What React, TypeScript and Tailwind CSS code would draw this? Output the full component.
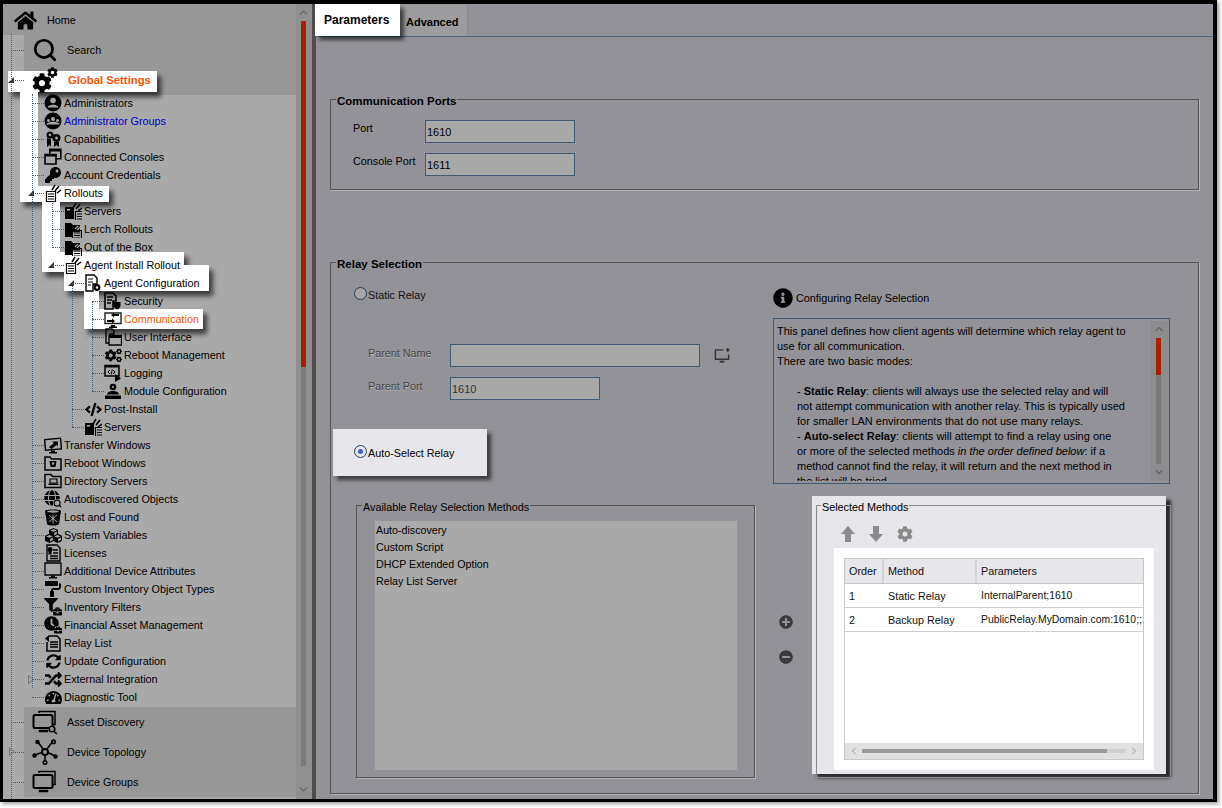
import type { ReactNode } from 'react'
import { Search, ChevronUp, ChevronDown, ChevronLeft, ChevronRight } from 'lucide-react'
import {
  FaHome, FaCog, FaKey, FaCogs, FaCode, FaGlobe, FaCubes, FaPaintRoller, FaFilter, FaBriefcase,
  FaClock, FaSyncAlt, FaRandom, FaTachometerAlt,
  FaInfoCircle, FaPlusCircle, FaMinusCircle,
} from 'react-icons/fa'

// base box for the small tree glyphs
function G({ children }: { children: ReactNode }) {
  return (
    <svg viewBox="0 0 18 18" className="w-[18px] h-[18px]" fill="black" stroke="none">
      {children}
    </svg>
  )
}

const Sparks = ({ x = 0, y = 0 }: { x?: number; y?: number }) => (
  <g transform={`translate(${x} ${y})`} stroke="black" strokeWidth="1.5" fill="none">
    <path d="M1 6 L4 1 M4 7 L8 2 M6 9 L10 6" />
  </g>
)

const DocLines = ({ x = 0, y = 0 }: { x?: number; y?: number }) => (
  <g transform={`translate(${x} ${y})`} stroke="black" strokeWidth="1.2" fill="none">
    <path d="M0.5 0.5h9v10h-9z M2 3h6 M2 5.5h6 M2 8h6" />
  </g>
)

const RolloutIcon = () => <G><DocLines x={2} y={7} /><Sparks x={7} y={0} /></G>
const ServerIcon = () => (
  <G><rect x="1" y="5" width="9" height="12" /><rect x="3" y="7" width="3" height="1.5" fill="#a9a9a9" /><DocLines x={11} y={9} /><Sparks x={8} y={0} /></G>
)
const FolderRollout = () => (
  <G>
    <path d="M1 3h6l2 2h7v7H8v5H1z" />
    <path d="M11 9l3-3M13 10l3-3" stroke="#a9a9a9" strokeWidth="1.2" />
    <DocLines x={8} y={10} />
  </G>
)

const WIcon = {
  admin: () => (
    <G>
      <circle cx="9" cy="9" r="8.5" />
      <circle cx="9" cy="6.5" r="2.8" fill="#a9a9a9" />
      <path d="M4 13.5h10v-1.2l-3.5-1.5h-3L4 12.3z" fill="#a9a9a9" />
    </G>
  ),
  group: () => (
    <G>
      <circle cx="9" cy="9" r="8.5" />
      <circle cx="9" cy="7" r="2" fill="#a9a9a9" />
      <circle cx="4.5" cy="8.5" r="1.5" fill="#a9a9a9" />
      <circle cx="13.5" cy="8.5" r="1.5" fill="#a9a9a9" />
      <path d="M2.5 12.5h13v-1l-2-1h-1l-1-.8h-5l-1 .8h-1l-2 1z" fill="#a9a9a9" />
    </G>
  ),
  capability: () => (
    <G>
      <circle cx="6" cy="5" r="3.5" /><circle cx="6" cy="5" r="1.3" fill="#a9a9a9" />
      <circle cx="12.5" cy="8" r="4" /><circle cx="12.5" cy="8" r="1.5" fill="#a9a9a9" />
      <path d="M3 8v9l2.5-2 1.5 2V9z M10 12v5l2.5-2 2.5 2v-5z" />
    </G>
  ),
  consoles: () => (
    <G>
      <g stroke="black" strokeWidth="1.6" fill="#a9a9a9">
        <path d="M5.8 1.2h11v9.5h-11z" />
        <path d="M1 6.5h11v9.5H1z" />
      </g>
      <rect x="5.5" y="1" width="11.5" height="2.5" />
      <rect x="1" y="6" width="11.5" height="2.5" />
    </G>
  ),
  agentConfig: () => (
    <G>
      <path d="M2 1h8l3 3v6H9v7H2z" fill="none" stroke="black" strokeWidth="1.4" />
      <path d="M4 5h5M4 8h5M4 11h3" stroke="black" strokeWidth="1.2" />
      <circle cx="13" cy="13.5" r="3.4" /><circle cx="13" cy="13.5" r="1.2" fill="white" />
    </G>
  ),
  security: () => (
    <G>
      <path d="M1 1h8l3 3v5H9v8H1z" fill="none" stroke="black" strokeWidth="1.6" />
      <path d="M3 5h6M3 8h5M3 11h4" stroke="black" strokeWidth="1.3" />
      <path d="M9.5 10h7v3.5c0 2-2 3.5-3.5 4-1.500-.5-3.500-2-3.500-4z" />
    </G>
  ),
  comm: () => (
    <G>
      <path d="M1 3h16v10.500H1z" fill="none" stroke="#222" strokeWidth="1.400" />
      <path d="M7 15h4v1.500h2V18H5v-1.500h2z" />
      <path d="M3 10h5V8.500L11 11 8 13.500V12H3z M15 6h-5v1.500L7 5l3-2.500V4h5z" />
    </G>
  ),
  ui: () => (
    <G>
      <path d="M2 1h6l2 2v3H6v9H2z" fill="none" stroke="black" strokeWidth="1.400" />
      <path d="M5 7.500h12.500V17H5z" fill="#a9a9a9" stroke="black" strokeWidth="1.300" />
      <rect x="5" y="7" width="13" height="3" />
    </G>
  ),
  logging: () => (
    <G>
      <path d="M1 1.500h14v10.500H1z" fill="none" stroke="black" strokeWidth="1.500" />
      <rect x="1" y="1" width="14" height="2.500" />
      <path d="M6 6 4 8l2 2M9 6l2 2-2 2M8.300 5.500 7.200 10.500" fill="none" stroke="black" strokeWidth="1" />
      <path d="M11 10l6 4.500L11 18z" />
    </G>
  ),
  module: () => (
    <G>
      <circle cx="9" cy="5" r="3.300" />
      <circle cx="9" cy="5" r="1.100" fill="#a9a9a9" />
      <path d="M3 12.500c0-2 3-3.500 6-3.500s6 1.500 6 3.500z" />
      <rect x="1" y="13.500" width="16" height="3.500" />
    </G>
  ),
  transfer: () => (
    <G>
      <path d="M1 3h16v10.500H1z" fill="none" stroke="black" strokeWidth="1.400" transform="rotate(-5 9 8)" />
      <path d="M7 14.500h4V16H7z M5 16h8v1.500H5z" />
      <path d="M5 11l5-4-2-1.500h6v5l-1.500-1.500-5 4z" />
    </G>
  ),
  rebootWin: () => (
    <G>
      <path d="M1 3h5l1.500 2H17v11H1z" fill="none" stroke="black" strokeWidth="1.500" />
      <path d="M5.500 7h7l-1 6h-5z" />
      <circle cx="9" cy="9.500" r="1.300" fill="#a9a9a9" />
    </G>
  ),
  directory: () => (
    <G>
      <path d="M1 2.500h6l1.500 2H17v11H1z" fill="none" stroke="black" strokeWidth="1.500" />
      <path d="M6 7h7v4H6z" fill="none" stroke="black" strokeWidth="1.200" />
      <rect x="4.500" y="11.500" width="10" height="1.500" />
    </G>
  ),
  bin: () => (
    <G>
      <path d="M1 3c0-2 16-2 16 0l-2 13c-1 2-11 2-12 0z" />
      <ellipse cx="9" cy="3.500" rx="6" ry="1.200" fill="#a9a9a9" />
      <path d="M5 7l8 7M13 7l-8 7M9 6.500v9" stroke="#a9a9a9" strokeWidth="1" />
    </G>
  ),
  license: () => (
    <G>
      <path d="M3 1h10l3 3v13H3z" fill="none" stroke="black" strokeWidth="1.400" />
      <path d="M9 6h5M9 9h5M6 12h8M6 14.500h8" stroke="black" strokeWidth="1.300" />
      <circle cx="6" cy="5.500" r="2.500" />
      <path d="M4.500 7.500v3.500L6 10l1.500 1V7.500z" />
    </G>
  ),
  attr: () => (
    <G>
      <path d="M1 1h16v12H1z" fill="none" stroke="black" strokeWidth="1.300" />
      <path d="M7 13.500h4V15h2v1.500H5V15h2z" />
    </G>
  ),
  relayList: () => (
    <G>
      <path d="M5 2h8l3 3v12H3V8" fill="none" stroke="black" strokeWidth="1.500" />
      <path d="M6 8h8M6 10.500h8M6 13h8" stroke="black" strokeWidth="1.300" />
      <path d="M1 4.500 5 1v7z" />
    </G>
  ),
}

const Over = ({ base, sub }: { base: ReactNode; sub: ReactNode }) => (
  <span className="relative block w-[18px] h-[18px]">
    {base}
    <span className="absolute right-0 bottom-0 bg-[#a9a9a9] rounded-sm">{sub}</span>
  </span>
)

const Fa = ({ children }: { children: ReactNode }) => (
  <span className="flex w-[18px] h-[18px] items-center justify-center text-black">{children}</span>
)

type Row = {
  label: string
  level: 1 | 2 | 3 | 4
  icon: ReactNode
  tone?: string
  open?: boolean
  closed?: boolean
}

const ROWS: Row[] = [
  { label: 'Administrators', level: 1, icon: <WIcon.admin /> },
  { label: 'Administrator Groups', level: 1, icon: <WIcon.group />, tone: 'text-[#0000c8]' },
  { label: 'Capabilities', level: 1, icon: <WIcon.capability /> },
  { label: 'Connected Consoles', level: 1, icon: <WIcon.consoles /> },
  { label: 'Account Credentials', level: 1, icon: <Fa><FaKey size={16} /></Fa> },
  { label: 'Rollouts', level: 1, icon: <RolloutIcon />, open: true },
  { label: 'Servers', level: 2, icon: <ServerIcon /> },
  { label: 'Lerch Rollouts', level: 2, icon: <FolderRollout /> },
  { label: 'Out of the Box', level: 2, icon: <FolderRollout /> },
  { label: 'Agent Install Rollout', level: 2, icon: <RolloutIcon />, open: true },
  { label: 'Agent Configuration', level: 3, icon: <WIcon.agentConfig />, open: true },
  { label: 'Security', level: 4, icon: <WIcon.security /> },
  { label: 'Communication', level: 4, icon: <WIcon.comm />, tone: 'text-[#ff5000]' },
  { label: 'User Interface', level: 4, icon: <WIcon.ui /> },
  { label: 'Reboot Management', level: 4, icon: <Fa><FaCogs size={17} /></Fa> },
  { label: 'Logging', level: 4, icon: <WIcon.logging /> },
  { label: 'Module Configuration', level: 4, icon: <WIcon.module /> },
  { label: 'Post-Install', level: 3, icon: <Fa><FaCode size={17} /></Fa> },
  { label: 'Servers', level: 3, icon: <ServerIcon /> },
  { label: 'Transfer Windows', level: 1, icon: <WIcon.transfer /> },
  { label: 'Reboot Windows', level: 1, icon: <WIcon.rebootWin /> },
  { label: 'Directory Servers', level: 1, icon: <WIcon.directory /> },
  { label: 'Autodiscovered Objects', level: 1, icon: <Over base={<FaGlobe size={16} />} sub={<Search size={9} strokeWidth={3} />} /> },
  { label: 'Lost and Found', level: 1, icon: <WIcon.bin /> },
  { label: 'System Variables', level: 1, icon: <Fa><FaCubes size={17} /></Fa> },
  { label: 'Licenses', level: 1, icon: <WIcon.license /> },
  { label: 'Additional Device Attributes', level: 1, icon: <WIcon.attr /> },
  { label: 'Custom Inventory Object Types', level: 1, icon: <Fa><FaPaintRoller size={16} /></Fa> },
  { label: 'Inventory Filters', level: 1, icon: <Over base={<FaFilter size={14} />} sub={<FaBriefcase size={9} />} /> },
  { label: 'Financial Asset Management', level: 1, icon: <Over base={<FaClock size={15} />} sub={<FaBriefcase size={8} />} /> },
  { label: 'Relay List', level: 1, icon: <WIcon.relayList /> },
  { label: 'Update Configuration', level: 1, icon: <Fa><FaSyncAlt size={15} /></Fa> },
  { label: 'External Integration', level: 1, icon: <Fa><FaRandom size={17} /></Fa>, closed: true },
  { label: 'Diagnostic Tool', level: 1, icon: <Fa><FaTachometerAlt size={17} /></Fa> },
]

const INDENT = { 1: 'pl-[29px]', 2: 'pl-[49px]', 3: 'pl-[69px]', 4: 'pl-[89px]' }
const ARROW = { 1: 'left-[25px]', 2: 'left-[45px]', 3: 'left-[65px]', 4: 'left-[85px]' }

const OpenMark = ({ className }: { className: string }) => (
  <svg viewBox="0 0 6 6" className={`absolute z-20 w-[6px] h-[6px] ${className}`}>
    <path d="M6 0v6H0z" fill="#333" />
  </svg>
)
const ClosedMark = ({ className }: { className: string }) => (
  <svg viewBox="0 0 6 9" className={`absolute z-20 w-[6px] h-[9px] ${className}`}>
    <path d="M.5.5 5.500 4.500.5 8.500z" fill="none" stroke="#777" />
  </svg>
)

function TreeRow({ row }: { row: Row }) {
  return (
    <div className={`relative flex h-[18px] items-center ${INDENT[row.level]}`}>
      {row.open && <OpenMark className={`top-[6px] ${ARROW[row.level]}`} />}
      {row.closed && <ClosedMark className={`top-[5px] ${ARROW[row.level]}`} />}
      <span className="relative z-20 w-[12px] border-t border-dotted border-[#3f5f7d]" />
      <span className="relative z-20 w-[18px] h-[18px]">{row.icon}</span>
      <span className={`relative z-20 ml-[2px] whitespace-nowrap ${row.tone ?? 'text-black'}`}>{row.label}</span>
    </div>
  )
}

function HeadRow({ label, icon, tone, closed }: { label: ReactNode; icon: ReactNode; tone?: string; closed?: boolean }) {
  return (
    <div className="flex h-[30px] bg-[#a9a9a9]">
      <div className="relative flex w-[21px] items-center justify-end">
        {closed && <ClosedMark className="left-[6px] top-[10px]" />}
        <span className="relative z-20 w-[13px] border-t border-dotted border-[#3f5f7d]" />
      </div>
      <div className="flex flex-1 items-center bg-[#979797]">
        <span className="relative z-20 flex w-[26px] h-[26px] ml-[8px] items-center justify-center">{icon}</span>
        <span className={`relative z-20 ml-[9px] ${tone ?? 'text-black'}`}>{label}</span>
      </div>
    </div>
  )
}

const GearsIcon = () => (
  <span className="relative block w-[26px] h-[26px]">
    <FaCog size={20} className="absolute left-0 bottom-0 text-black" />
    <FaCog size={11} className="absolute right-0 top-0 text-black" />
  </span>
)

const MonitorStack = ({ lens }: { lens?: boolean }) => (
  <svg viewBox="0 0 26 26" className="w-[26px] h-[26px]" fill="none" stroke="black">
    <path d="M7 4V2.500h16v13h-2" strokeWidth="1.500" />
    <rect x="1.500" y="6" width="19" height="13" rx="1.500" strokeWidth="2" />
    <path d="M7 21h9v2H7z" fill="black" strokeWidth="0.500" />
    {lens && (
      <g strokeWidth="1.600">
        <circle cx="20" cy="20" r="2.800" fill="#979797" />
        <path d="M22 22.200l2.800 2.800" />
      </g>
    )}
  </svg>
)

const TopologyIcon = () => (
  <svg viewBox="0 0 26 26" className="w-[26px] h-[26px]" fill="none" stroke="black" strokeWidth="1.500">
    <path d="M6 3l5 7M21 2l-6 8M3 16l8-3M23 17l-8-4M13 16v6" />
    <circle cx="13" cy="13" r="3" strokeWidth="2" />
    <circle cx="21.500" cy="2.800" r="1.800" />
    <circle cx="13" cy="23.500" r="1.800" />
    <circle cx="5.500" cy="3" r="1.500" fill="black" />
    <circle cx="2.500" cy="16.500" r="1.500" fill="black" />
    <circle cx="23.500" cy="17.500" r="1.500" fill="black" />
  </svg>
)

function Sidebar() {
  return (
    <div className="relative w-[293px] h-full bg-[#a9a9a9]">
      {/* white call-out marks drawn on the tree */}
      <div className="absolute z-10 left-[5px] top-[67px] w-[149px] h-[21px] bg-white shadow-[4px_5px_5px_rgba(0,0,0,0.65)]" />
      <div className="absolute z-10 left-[17px] top-[88px] w-[18px] h-[106px] bg-white" />
      <div className="absolute z-10 left-[17px] top-[182px] w-[89px] h-[16px] bg-white shadow-[4px_5px_5px_rgba(0,0,0,0.65)]" />
      <div className="absolute z-10 left-[39px] top-[198px] w-[18px] h-[52px] bg-white" />
      <div className="absolute z-10 left-[39px] top-[248px] w-[142px] h-[20px] bg-white shadow-[4px_5px_5px_rgba(0,0,0,0.65)]" />
      <div className="absolute z-10 left-[61px] top-[261px] w-[145px] h-[26px] bg-white shadow-[4px_5px_5px_rgba(0,0,0,0.65)]" />
      <div className="absolute z-10 left-[81px] top-[287px] w-[15px] h-[38px] bg-white" />
      <div className="absolute z-10 left-[81px] top-[305px] w-[119px] h-[20px] bg-white shadow-[4px_5px_5px_rgba(0,0,0,0.65)]" />

      {/* tree guide lines */}
      <div className="absolute z-20 left-[8px] top-[30px] bottom-0 border-l border-dotted border-[#3f5f7d]" />
      <div className="absolute z-20 left-[29px] top-[90px] h-[594px] border-l border-dotted border-[#3f5f7d]" />
      <div className="absolute z-20 left-[49px] top-[197px] h-[45px] border-l border-dotted border-[#3f5f7d]" />
      <div className="absolute z-20 left-[69px] top-[279px] h-[144px] border-l border-dotted border-[#3f5f7d]" />
      <div className="absolute z-20 left-[89px] top-[297px] h-[90px] border-l border-dotted border-[#3f5f7d]" />
      <OpenMark className="left-[5px] top-[73px]" />

      <div className="flex h-[31px] items-center bg-[#979797] pl-[11px] pt-[1px]">
        <FaHome size={23} className="text-black" />
        <span className="ml-[10px] text-black">Home</span>
      </div>
      <HeadRow label="Search" icon={<Search size={26} strokeWidth={2.5} className="text-black" />} />
      <HeadRow label={<span className="text-[11.3px] ml-[1px]">Global Settings</span>} tone="text-[#ff5000] font-bold" icon={<GearsIcon />} />
      <div className="-mt-px">
        {ROWS.map((row, i) => <TreeRow key={i} row={row} />)}
      </div>
      <div className="mt-px">
        <HeadRow label="Asset Discovery" icon={<MonitorStack lens />} />
        <HeadRow label="Device Topology" icon={<TopologyIcon />} closed />
        <HeadRow label="Device Groups" icon={<MonitorStack />} />
      </div>
    </div>
  )
}

function TreeScrollbar() {
  return (
    <div className="flex w-[16px] h-full flex-col items-center bg-[#8f8f8f] pr-[1px]">
      <ChevronUp size={13} strokeWidth={2.5} className="mt-[2px] text-[#666]" />
      <div className="mt-[2px] flex flex-col flex-1 w-[5px] mb-[17px]">
        <div className="h-[346px] bg-[#a82000]" />
        <div className="flex-1 bg-[#7a7a7a]" />
      </div>
      <ChevronDown size={13} strokeWidth={2.5} className="mb-[3px] text-[#666]" />
    </div>
  )
}

function Group({ title, bold, tone, className, children }: { title: string; bold?: boolean; tone?: string; className: string; children?: ReactNode }) {
  return (
    <div className={`relative border border-[#555] shadow-[1px_1px_0_#b4b4b8] ${className}`}>
      <span className={`absolute left-[5px] -top-[6px] px-[1px] leading-[14px] text-black ${bold ? 'font-bold text-[11.5px]' : ''} ${tone ?? 'bg-[#939298]'}`}>{title}</span>
      {children}
    </div>
  )
}

const inputCls = 'h-[23px] border-[1.5px] border-[#3e5c76] bg-[#a8a8a8] pl-[1px] pt-[3px] leading-[16px] text-[11px]'

function Radio({ on, dim }: { on?: boolean; dim?: boolean }) {
  return (
    <span className={`-mt-[3px] flex w-[13px] h-[13px] items-center justify-center rounded-full border-[1.5px] border-[#24425e] ${dim ? 'bg-[#a6a6a6]' : 'bg-[#e6e6eb]'}`}>
      {on && <span className="w-[5px] h-[5px] rounded-full bg-[#3a5fc8]" />}
    </span>
  )
}

function HelpPanel() {
  return (
    <div className="relative h-[166px] w-[397px] border-[1.5px] border-[#3e5c76] pl-[3px] pt-[5px] leading-[15px] text-black text-[11px]">
      <div className="h-[157px] overflow-hidden">
        This panel defines how client agents will determine which relay agent to<br />
        use for all communication.<br />
        There are two basic modes:<br />
        <br />
        <div className="ml-[20px]">
          - <b>Static Relay</b>: clients will always use the selected relay and will<br />
          not attempt communication with another relay. This is typically used<br />
          for smaller LAN environments that do not use many relays.<br />
          - <b>Auto-select Relay</b>: clients will attempt to find a relay using one<br />
          or more of the selected methods <i>in the order defined below</i>: if a<br />
          method cannot find the relay, it will return and the next method in<br />
          the list will be tried.
        </div>
      </div>
      <div className="absolute right-0 top-[2px] bottom-[2px] flex w-[18px] flex-col items-center bg-[#8c8c8f] pr-[3px] pt-[2px]">
        <ChevronUp size={12} strokeWidth={2.5} className="text-[#666]" />
        <div className="mt-[3px] w-[5px] h-[126px]">
          <div className="h-[37px] bg-[#a82000]" />
          <div className="h-[89px] bg-[#7a7a7a]" />
        </div>
        <ChevronDown size={12} strokeWidth={2.5} className="mt-[2px] text-[#666]" />
      </div>
    </div>
  )
}

const TABLE_ROWS = [
  { order: '1', method: 'Static Relay', params: 'InternalParent;1610' },
  { order: '2', method: 'Backup Relay', params: 'PublicRelay.MyDomain.com:1610;;' },
]

function MethodsTable() {
  return (
    <div className="flex h-[202px] w-[300px] flex-col overflow-hidden border border-[#c8c8c8] bg-white text-[#111]">
      <div className="flex h-[25px] shrink-0 items-center border-b border-[#c8c8c8] bg-[#e6e6eb]">
        <span className="flex h-full w-[39px] shrink-0 items-center border-r-2 border-[#d4d4d8] pl-[4px] pt-px">Order</span>
        <span className="flex h-full w-[93px] shrink-0 items-center border-r-2 border-[#d4d4d8] pl-[4px] pt-px">Method</span>
        <span className="pl-[4px] pt-px">Parameters</span>
      </div>
      {TABLE_ROWS.map(r => (
        <div key={r.order} className="flex h-[24px] shrink-0 items-center border-b border-[#cfcfcf] whitespace-nowrap pt-px">
          <span className="w-[39px] shrink-0 pl-[4px]">{r.order}</span>
          <span className="w-[93px] shrink-0 pl-[4px]">{r.method}</span>
          <span className="pl-[4px] text-[10.4px]">{r.params}</span>
        </div>
      ))}
      <div className="mt-auto flex h-[16px] items-center bg-[#e0e0e0] px-[3px]">
        <ChevronLeft size={12} strokeWidth={2} className="text-[#999]" />
        <div className="ml-[2px] flex h-[4px] w-[264px] bg-[#cfcfcf]">
          <div className="h-full w-[245px] bg-[#999]" />
        </div>
        <ChevronRight size={12} strokeWidth={2} className="ml-[2px] text-[#999]" />
      </div>
    </div>
  )
}

const BlockArrow = ({ down }: { down?: boolean }) => (
  <svg viewBox="0 0 14 16" className={`w-[14px] h-[16px] ${down ? 'rotate-180' : ''}`} fill="#8a8a8a">
    <path d="M7 0l7 8h-4v8H4V8H0z" />
  </svg>
)

function SelectedMethods() {
  return (
    <div className="relative -mt-[9px] h-[278px] w-[354px] bg-[#e6e6eb] pl-[22px] pt-[30px] shadow-[5px_4px_3px_rgba(0,0,0,0.7)]">
      <div className="pointer-events-none absolute left-[4px] top-[9px] -right-[5px] -bottom-[4px] border border-[#8a8a8e]">
        <span className="absolute left-[4px] -top-[6px] bg-[#e6e6eb] px-[1px] leading-[14px] text-black">Selected Methods</span>
      </div>
      <div className="flex h-[16px] items-center gap-[14px] pl-[7px] text-[#8a8a8a]">
        <BlockArrow />
        <BlockArrow down />
        <FaCog size={16} />
      </div>
      <div className="mt-[6px] h-[222px] w-[320px] bg-white p-[10px]">
        <MethodsTable />
      </div>
    </div>
  )
}

function Content() {
  return (
    <div className="flex-1 h-full bg-[#939298] text-black">
      <div className="relative flex h-[33px] border-b border-[#4a6a80]">
        <div className="relative z-10 -ml-px flex h-[32px] w-[85px] pl-[9px] items-center bg-white font-bold text-[12px] shadow-[4px_4px_4px_rgba(0,0,0,0.6)]">Parameters</div>
        <div className="flex h-[31px] mt-px w-[68px] items-center bg-[#9c9c9e] pl-[6px] pt-[3px] font-bold text-[11px] border-r border-[#8a8a8e]">Advanced</div>
      </div>

      <div className="pl-[14px] pt-[62px]">
        <Group title="Communication Ports" bold className="h-[91px] w-[869px]">
          <div className="flex flex-col gap-[10px] pl-[22px] pt-[20px]">
            <div className="flex">
              <span className="w-[72px]">Port</span>
              <div className={`${inputCls} w-[150px]`}>1610</div>
            </div>
            <div className="flex">
              <span className="w-[72px]">Console Port</span>
              <div className={`${inputCls} w-[150px]`}>1611</div>
            </div>
          </div>
        </Group>

        <Group title="Relay Selection" bold className="mt-[72px] h-[532px] w-[869px] pt-px">
          <div className="flex">
            <div className="w-[442px] pl-[2px]">
              <div className="flex items-center pl-[21px] pt-[23px]">
                <Radio dim />
                <span className="ml-[1px] text-[#111]">Static Relay</span>
              </div>
              <div className="mt-[41px] flex flex-col gap-[10px] pl-[35px] text-[#444] [text-shadow:0_1px_0_#b5b5b8]">
                <div className="flex">
                  <span className="w-[82px] pt-px">Parent Name</span>
                  <div className={`${inputCls} w-[250px]`} />
                  <svg viewBox="0 0 18 18" className="ml-[14px] mt-[3px] w-[17px] h-[17px]" fill="none" stroke="#333" strokeWidth="1.500">
                    <path d="M10 3H1.500v10h14V8" />
                    <path d="M6 15.500h5" strokeWidth="2" />
                    <path d="M14.500 1v4M12.500 3h4" />
                  </svg>
                </div>
                <div className="flex">
                  <span className="w-[82px] pt-px">Parent Port</span>
                  <div className={`${inputCls} w-[150px] [text-shadow:none] text-[#333]`}>1610</div>
                </div>
              </div>
              <div className="mt-[29px] flex h-[47px] w-[154px] items-center bg-[#e6e6eb] pl-[21px] shadow-[4px_4px_4px_rgba(0,0,0,0.6)]">
                <Radio on />
                <span className="ml-[1px]">Auto-Select Relay</span>
              </div>
            </div>
            <div className="pt-[24px]">
              <div className="flex h-[20px] items-center">
                <FaInfoCircle size={20} className="text-black" />
                <span className="ml-[3px]">Configuring Relay Selection</span>
              </div>
              <div className="mt-[10px]"><HelpPanel /></div>
            </div>
          </div>

          <div className="mt-[21px] flex pl-[25px]">
            <Group title="Available Relay Selection Methods" className="h-[273px] w-[399px] pl-[18px] pt-[15px]">
              <div className="flex h-[249px] w-[362px] flex-col bg-[#a9a9a9] pl-[1px] pt-px text-[10.7px]">
                {['Auto-discovery', 'Custom Script', 'DHCP Extended Option', 'Relay List Server'].map(m => (
                  <span key={m} className="h-[17px] leading-[17px] text-black">{m}</span>
                ))}
              </div>
            </Group>
            <div className="ml-[24px] flex flex-col gap-[21px] pt-[110px] text-[#3a3a3a]">
              <FaPlusCircle size={14} />
              <FaMinusCircle size={14} />
            </div>
            <div className="ml-[19px]"><SelectedMethods /></div>
          </div>
        </Group>
      </div>
    </div>
  )
}

export default function App() {
  return (
    <div className="w-[1222px] h-[808px] overflow-hidden bg-white font-['Liberation_Sans',Arial,sans-serif] text-[10.8px]">
      <div className="flex w-[1217px] h-[802px] border-t-4 border-l-3 border-r-4 border-b-3 border-black shadow-[2px_2px_4px_rgba(0,0,0,0.4)]">
        <Sidebar />
        <TreeScrollbar />
        <div className="w-[4px] h-full bg-[#4d4d4d]" />
        <Content />
      </div>
    </div>
  )
}
